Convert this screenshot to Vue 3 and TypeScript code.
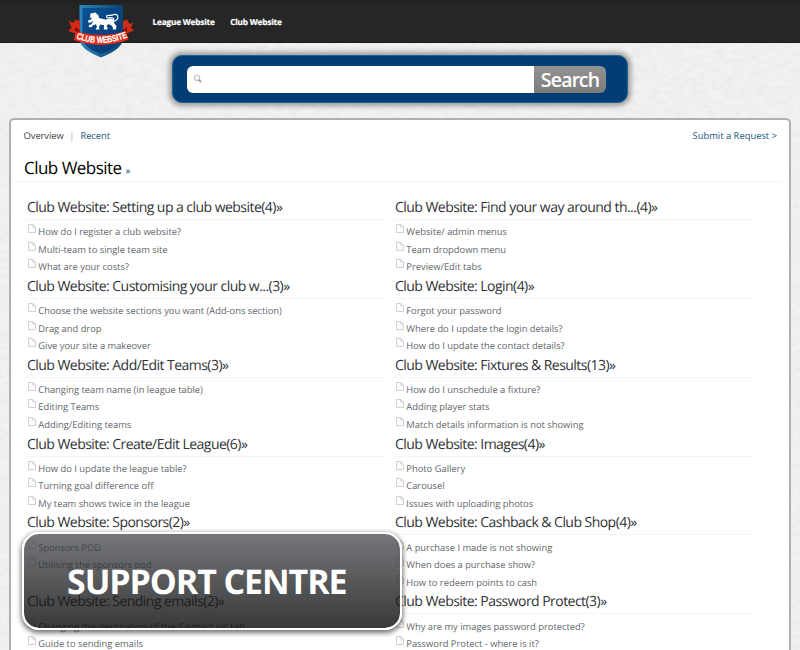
<script setup lang="ts">
interface Section {
  title: string
  items: string[]
}

const left: Section[] = [
  { title: 'Setting up a club website(4)', items: ['How do I register a club website?', 'Multi-team to single team site', 'What are your costs?'] },
  { title: 'Customising your club w...(3)', items: ['Choose the website sections you want (Add-ons section)', 'Drag and drop', 'Give your site a makeover'] },
  { title: 'Add/Edit Teams(3)', items: ['Changing team name (in league table)', 'Editing Teams', 'Adding/Editing teams'] },
  { title: 'Create/Edit League(6)', items: ['How do I update the league table?', 'Turning goal difference off', 'My team shows twice in the league'] },
  { title: 'Sponsors(2)', items: ['Sponsors POD', 'Utilising the sponsors pod'] },
  { title: 'Sending emails(2)', items: ["Changing the destination of the 'Contact us' tab", 'Guide to sending emails'] },
]

const right: Section[] = [
  { title: 'Find your way around th...(4)', items: ['Website/ admin menus', 'Team dropdown menu', 'Preview/Edit tabs'] },
  { title: 'Login(4)', items: ['Forgot your password', 'Where do I update the login details?', 'How do I update the contact details?'] },
  { title: 'Fixtures & Results(13)', items: ['How do I unschedule a fixture?', 'Adding player stats', 'Match details information is not showing'] },
  { title: 'Images(4)', items: ['Photo Gallery', 'Carousel', 'Issues with uploading photos'] },
  { title: 'Cashback & Club Shop(4)', items: ['A purchase I made is not showing', 'When does a purchase show?', 'How to redeem points to cash'] },
  { title: 'Password Protect(3)', items: ['Why are my images password protected?', 'Password Protect - where is it?'] },
]

const columns: Section[][] = [left, right]
</script>

<template>
  <div class="page">
    <svg class="texture" width="800" height="650" aria-hidden="true">
      <filter id="paper">
        <feTurbulence type="fractalNoise" baseFrequency="0.12 0.22" numOctaves="3" seed="4" />
        <feColorMatrix values="0 0 0 0 0  0 0 0 0 0  0 0 0 0 0  0.05 0 0 0 -0.01" />
      </filter>
      <rect width="800" height="650" filter="url(#paper)" />
    </svg>
    <header class="topbar">
      <svg class="logo" width="76" height="60" viewBox="0 0 76 60">
        <defs>
          <linearGradient id="shield" x1="0" y1="0" x2="1" y2="1">
            <stop offset="0" stop-color="#0d5291" />
            <stop offset="0.4" stop-color="#084684" />
            <stop offset="1" stop-color="#063c72" />
          </linearGradient>
          <linearGradient id="rim" x1="0" y1="0" x2="1" y2="0">
            <stop offset="0" stop-color="#2f86bf" />
            <stop offset="0.5" stop-color="#1c6297" />
            <stop offset="1" stop-color="#08426f" />
          </linearGradient>
          <path id="arc" d="M13 38 Q39 48.500 66 37" />
        </defs>
        <path d="M17.500 5H61V39Q60.500 49 39 57.500Q17.500 49 17.500 39Z" fill="url(#rim)" />
        <path d="M20.500 8H58V38Q57.500 47 39 54Q20.500 47 20.500 38Z" fill="url(#shield)" />
        <path d="M6.500 20.500L10 22.500L12.500 22L13 19.500L18 21V33H12L6 31L9.500 27.500Z" fill="#d02a18" />
        <path d="M71.500 22L68 24L66 22L65 19.500L61 21V33H66L72 30.500L69 27.500Z" fill="#d02a18" />
        <path d="M13 27L17.500 30V33L13 32Z M65 27L61 30V33L65 32Z" fill="#7b130e" />
        <path d="M13.500 31Q39 39 64 31L66.500 39.500Q39 50 12 40Z" fill="#e92c14" />
        <path fill="#fff" d="M28 14.500L29.500 13L31.500 13.200L33 12.300L35 14L36.500 15.500L37 18L43 19.400L49 18.400L52 20L52 23L54.500 26L54 29.500H50.500L51.300 28.400L49.800 25.800L46.500 24L44.500 26L45.500 27.500V29.500H41.800L42 25.300L38.500 24.400L37 26.800L37.500 29.500H33.800L34 28.200L35 27L34 24.300L31 25.300L29.500 27.300L26.800 27L27 25L29.500 24.300L31.500 20.800L28 23L26.200 22.200L26 20.500L29 19.600L30 17.600L27.500 17.800L28.500 16Z" />
        <path d="M51 20.500C53.500 19 50 17 47 17.800C43.500 18.200 44 14.800 47 15.300C50 16 53.500 12.500 55.500 15.500C57 19 54 21 51.500 21.500" fill="none" stroke="#fff" stroke-width="1.200" />
        <text class="ribbon"><textPath href="#arc" startOffset="1" textLength="53" lengthAdjust="spacingAndGlyphs">CLUB WEBSITE</textPath></text>
      </svg>
      <nav class="nav">
        <a class="league">League Website</a>
        <a class="club">Club Website</a>
      </nav>
    </header>

    <div class="search">
      <div class="field">
        <svg width="10" height="10" viewBox="0 0 10 10">
          <circle cx="4" cy="4" r="2.700" fill="#f7f7f7" stroke="#c3c3c3" stroke-width="1.100" />
          <path d="M6 6L8 8" stroke="#9c9c9c" stroke-width="2" />
        </svg>
      </div>
      <button class="go"><span>Search</span></button>
    </div>

    <main class="panel">
      <div class="tabs">
        <span class="overview">Overview</span>
        <span class="bar">|</span>
        <a class="recent">Recent</a>
        <a class="submit">Submit a Request &gt;</a>
      </div>
      <h1><span class="title">Club Website</span> <small>»</small></h1>
      <div class="columns">
        <div v-for="(col, c) in columns" :key="c" class="column">
          <section v-for="s in col" :key="s.title">
            <h2>Club Website: {{ s.title }}»</h2>
            <ul>
              <li v-for="item in s.items" :key="item">
                <svg width="8" height="9" viewBox="0 0 8 9">
                  <path d="M.5 .5H4.800L7.500 3V8.500H.5Z M4.800 .5V3H7.500" fill="#fcfcfc" stroke="#cccccc" stroke-width=".9" />
                </svg>
                <span>{{ item }}</span>
              </li>
            </ul>
          </section>
        </div>
      </div>
    </main>

    <div class="banner"><span>SUPPORT CENTRE</span></div>
  </div>
</template>

<style>
body {
  margin: 0;
  background: #f0f0f0;
}
</style>

<style scoped>
.page {
  position: relative;
  width: 800px;
  height: 650px;
  overflow: hidden;
  background: #f3f3f3;
  font-family: "Open Sans", "Noto Sans", sans-serif;
  text-rendering: geometricPrecision;
}
.texture {
  position: absolute;
  inset: 0;
}
.topbar {
  position: relative;
  height: 43px;
  box-sizing: border-box;
  border-bottom: 1px solid #1b1b1b;
  background: linear-gradient(#202020, #262626 6px, #262626);
  display: flex;
  align-items: flex-start;
}
.logo {
  margin-left: 62px;
  flex: none;
}
.ribbon {
  font: bold 9px "Liberation Sans", sans-serif;
  fill: #fff;
  stroke: #fff;
  stroke-width: 0.2px;
}
.nav {
  display: flex;
  gap: 15.500px;
  margin-left: 14.500px;
  padding-top: 13px;
  color: #fff;
  font-size: 8.200px;
  letter-spacing: -0.150px;
  line-height: 20px;
  font-weight: 700;
}
.nav a {
  -webkit-text-stroke: 0.2px #fff;
}
.search {
  position: relative;
  box-sizing: border-box;
  width: 456px;
  height: 48px;
  margin: 12px 0 0 172px;
  padding: 10px 14px 10px 14px;
  display: flex;
  border: 1px solid #1d6493;
  border-radius: 10px;
  background: #023e75;
  box-shadow: 0 0 5px 3px rgba(0, 0, 0, 0.34);
}
.field {
  width: 347px;
  height: 27px;
  box-sizing: border-box;
  padding: 8px 0 0 6px;
  background: #fff;
  border-radius: 6px 0 0 6px;
}
.field svg {
  display: block;
}
.go {
  width: 72px;
  height: 27px;
  padding: 0;
  border: 0;
  border-radius: 0 6px 6px 0;
  background: linear-gradient(#939393, #7b7b7b);
  color: #fff;
  font: 500 19.500px/26px "Noto Sans", "Open Sans", sans-serif;
  letter-spacing: -0.700px;
  -webkit-text-stroke: 0.2px #fff;
}
.panel {
  position: relative;
  box-sizing: border-box;
  width: 782px;
  height: 560px;
  margin: 15px 0 0 9px;
  padding: 9px 12px 0 12.500px;
  border: 2px solid #b0b0b0;
  border-radius: 5px 5px 0 0;
  background: #fff;
}
.tabs {
  display: flex;
  height: 16px;
  line-height: 14px;
  font-size: 9.400px;
  color: #444;
}
.overview,
.recent {
  letter-spacing: -0.050px;
}
.bar {
  margin: 0 6px 0 5.500px;
  color: #a5a9bd;
}
.recent,
.submit {
  color: #1a5580;
}
.submit {
  margin-left: auto;
}
h1 {
  margin: 10px -5px 0 -7px;
  padding-left: 7.500px;
  height: 26px;
  border-bottom: 1px solid #f4f4f4;
  font-size: 17px;
  letter-spacing: -0.520px;
  line-height: 25px;
  font-weight: 400;
  color: #000;
}
small {
  font-size: 10px;
  color: #1a5580;
}
.columns {
  display: flex;
  gap: 9px;
  padding: 14px 0 0 3.500px;
}
.column {
  width: 359px;
}
section {
  height: 78.850px;
}
h2 {
  box-sizing: border-box;
  height: 24px;
  margin: 0 0 2.300px;
  border-bottom: 1px solid #f4f4f4;
  font-size: 14px;
  letter-spacing: -0.540px;
  line-height: 24px;
  font-weight: 400;
  color: #2f3336;
  white-space: nowrap;
}
ul {
  margin: 0;
  padding: 0;
  list-style: none;
}
li {
  display: flex;
  height: 17.500px;
  line-height: 19px;
  font-size: 9.350px;
  color: #5f676d;
  white-space: nowrap;
}
li svg {
  margin: 2px 2.300px 0 1px;
  flex: none;
}
.banner {
  position: absolute;
  left: 22px;
  top: 532px;
  width: 380px;
  height: 98px;
  box-sizing: border-box;
  display: flex;
  align-items: center;
  padding-left: 43px;
  border: 2px solid #fff;
  border-radius: 17px;
  background: linear-gradient(rgba(66, 68, 73, 0.73), rgba(8, 8, 8, 0.8)) padding-box;
  box-shadow: 0 2px 5px 1px rgba(0, 0, 0, 0.55);
  color: #fff;
  font-size: 34px;
  letter-spacing: -1.080px;
  line-height: 40px;
  font-weight: 700;
  white-space: nowrap;
}
</style>
